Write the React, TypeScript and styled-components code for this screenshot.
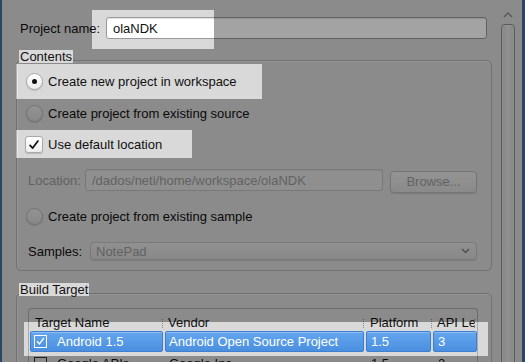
import React from 'react';
import styled, { createGlobalStyle } from 'styled-components';

const Global = createGlobalStyle`
  html, body { margin: 0; padding: 0; }
  body {
    width: 525px; height: 362px; overflow: hidden;
    background: #d9d9d9;
    font-family: "Liberation Sans", Arial, sans-serif;
  }
`;

const Window = styled.div`
  position: relative;
  width: 525px;
  height: 362px;
  overflow: hidden;
  display: flex;
  background: #d9d9d9;
  color: #111;
  font-size: 13px;
  line-height: 15px;
`;

const Edge = styled.div<{ $w: number }>`
  width: ${p => p.$w}px;
  flex-shrink: 0;
  background: #46709c;
`;

const Main = styled.div`
  width: 479px;
  padding-left: 14px;
  display: flex;
  flex-direction: column;
`;

const NameRow = styled.div`
  display: flex;
  align-items: center;
  margin-top: 17px;
  height: 22px;
`;

const Label = styled.span<{ $w: number; $pad?: number; $disabled?: boolean }>`
  width: ${p => p.$w}px;
  padding-left: ${p => p.$pad ?? 0}px;
  flex-shrink: 0;
  color: ${p => (p.$disabled ? '#9a9a9a' : '#111')};
`;

const TextInput = styled.div<{ $w: number; $disabled?: boolean }>`
  box-sizing: border-box;
  width: ${p => p.$w}px;
  height: 22px;
  border: 1px solid ${p => (p.$disabled ? '#bcbcbc' : '#9a9a9a')};
  border-radius: 3px;
  background: ${p => (p.$disabled ? '#e0e0e0' : '#ffffff')};
  box-shadow: inset 0 1px 1px rgba(0, 0, 0, ${p => (p.$disabled ? 0.05 : 0.12)});
  padding-left: 6px;
  display: flex;
  align-items: center;
  color: ${p => (p.$disabled ? '#9a9a9a' : '#111')};
`;

const Group = styled.div<{ $top: number }>`
  margin-top: ${p => p.$top}px;
  display: flex;
  flex-direction: column;
`;

const GroupTitle = styled.span`
  position: relative;
  z-index: 1;
  align-self: flex-start;
  margin-left: 3px;
  padding: 0 1px;
  height: 13px;
  line-height: 14px;
  background: #d9d9d9;
`;

const GroupBox = styled.div<{ $h: number; $padTop: number }>`
  box-sizing: border-box;
  margin-top: -3px;
  width: 476px;
  height: ${p => p.$h}px;
  border: 1px solid #b1b1b1;
  border-radius: 5px;
  box-shadow: inset 1px 1px 0 #e6e6e6;
  padding-top: ${p => p.$padTop}px;
  display: flex;
  flex-direction: column;
`;

const OptionRow = styled.div<{ $h: number; $pad?: number }>`
  height: ${p => p.$h}px;
  display: flex;
  align-items: center;
  gap: 5px;
  padding-left: ${p => p.$pad ?? 9}px;
`;

const Radio = styled.span<{ $on?: boolean }>`
  box-sizing: border-box;
  width: 17px;
  height: 17px;
  border-radius: 50%;
  border: 1px solid ${p => (p.$on ? '#a9a9a9' : '#b3b3b3')};
  background: ${p => (p.$on ? 'linear-gradient(#ffffff, #ececec)' : 'linear-gradient(#e6e6e6, #d4d4d4)')};
  box-shadow: 0 1px 1px rgba(0, 0, 0, 0.15);
  display: flex;
  align-items: center;
  justify-content: center;
  flex-shrink: 0;
  &::after {
    content: '';
    display: ${p => (p.$on ? 'block' : 'none')};
    width: 5px;
    height: 5px;
    border-radius: 50%;
    background: #111;
  }
`;

const CheckBox = styled.span`
  box-sizing: border-box;
  width: 18px;
  height: 17px;
  margin-left: -1px;
  border-radius: 3px;
  border: 1px solid #a9a9a9;
  background: linear-gradient(#ffffff, #eeeeee);
  box-shadow: 0 1px 1px rgba(0, 0, 0, 0.15);
  display: flex;
  align-items: center;
  justify-content: center;
  flex-shrink: 0;
`;

const FieldRow = styled.div<{ $h: number }>`
  height: ${p => p.$h}px;
  display: flex;
  align-items: center;
  padding-left: 11px;
`;

const Button = styled.div`
  box-sizing: border-box;
  margin-left: 7px;
  margin-top: 3px;
  width: 87px;
  height: 22px;
  border: 1px solid #b8b8b8;
  border-radius: 4px;
  background: linear-gradient(#e8e8e8, #d8d8d8);
  box-shadow: 0 1px 1px rgba(0, 0, 0, 0.12);
  color: #9a9a9a;
  display: flex;
  align-items: center;
  justify-content: center;
`;

const Combo = styled.div`
  box-sizing: border-box;
  width: 387px;
  height: 18px;
  border: 1px solid #bdbdbd;
  border-radius: 4px;
  background: linear-gradient(#e2e2e2, #d6d6d6);
  box-shadow: 0 1px 1px rgba(0, 0, 0, 0.12);
  color: #9a9a9a;
  display: flex;
  align-items: center;
  justify-content: space-between;
  padding: 0 6px 0 5px;
`;

const Table = styled.div`
  box-sizing: border-box;
  margin-left: 11px;
  width: 450px;
  height: 80px;
  border: 1px solid #aaaaaa;
  border-bottom: none;
  border-radius: 4px 4px 0 0;
  background: #d9d9d9;
  display: flex;
  flex-direction: column;
`;

const HeaderRow = styled.div`
  height: 22px;
  display: flex;
  align-items: flex-end;
  padding-bottom: 1px;
  box-sizing: border-box;
`;

const HeadCell = styled.div<{ $w: number; $pad: number }>`
  position: relative;
  width: ${p => p.$w}px;
  box-sizing: border-box;
  padding-left: ${p => p.$pad}px;
  white-space: nowrap;
  overflow: hidden;
  color: #111;
  &::after {
    content: '';
    position: absolute;
    right: 0;
    top: 4px;
    height: 9px;
    border-right: 1px dotted #8c8c8c;
  }
`;

const BodyRow = styled.div<{ $sel?: boolean }>`
  height: 22px;
  display: flex;
  gap: 2px;
  padding-left: 1px;
  box-sizing: border-box;
  color: ${p => (p.$sel ? '#ffffff' : '#111')};
`;

const Cell = styled.div<{ $w: number; $pad: number; $sel?: boolean }>`
  box-sizing: border-box;
  width: ${p => p.$w}px;
  height: 21px;
  padding-left: ${p => p.$pad}px;
  display: flex;
  align-items: center;
  gap: 10px;
  white-space: nowrap;
  overflow: hidden;
  border-radius: 2px;
  border: 1px solid ${p => (p.$sel ? '#3e7fd0' : 'transparent')};
  background: ${p => (p.$sel ? 'linear-gradient(#64a6ee, #4a8fe0)' : 'transparent')};
  box-shadow: ${p => (p.$sel ? 'inset 0 1px 0 rgba(255,255,255,0.25)' : 'none')};
`;

const TableCheck = styled.span<{ $sel?: boolean }>`
  box-sizing: border-box;
  width: 13px;
  height: 13px;
  border: 1px solid ${p => (p.$sel ? '#ffffff' : '#333333')};
  display: flex;
  align-items: center;
  justify-content: center;
  flex-shrink: 0;
`;

const ScrollCol = styled.div`
  width: 27px;
  flex-shrink: 0;
  display: flex;
  flex-direction: column;
  align-items: flex-start;
  padding-left: 6px;
  box-sizing: border-box;
`;

const Arrow = styled.svg`
  margin-top: 12px;
  margin-left: 2px;
`;

const Thumb = styled.div`
  box-sizing: border-box;
  margin-top: 6px;
  width: 14px;
  flex: 1;
  margin-bottom: -10px;
  border: 1px solid #8e8e8e;
  border-radius: 4px;
  background: linear-gradient(90deg, #d2d2d2, #e2e2e2 50%, #d2d2d2);
  box-shadow: 0 0 0 1px rgba(255, 255, 255, 0.3) inset;
`;

const Dim = styled.svg`
  position: absolute;
  left: 0;
  top: 0;
  pointer-events: none;
`;

const holes: [number, number, number, number][] = [
  [92, 10, 122, 39],
  [16, 64, 246, 35],
  [16, 130, 176, 28],
  [24, 322, 464, 34],
];

const dimPath =
  'M0 0H525V362H0Z ' + holes.map(([x, y, w, h]) => `M${x} ${y}h${w}v${h}h${-w}Z`).join(' ');

const Check = ({ color, size }: { color: string; size: number }) => (
  <svg width={size} height={size} viewBox="0 0 16 16">
    <path d="M3.5 8.5 L6.5 11.5 L12.5 3.5" fill="none" stroke={color} strokeWidth={2} strokeLinecap="round" strokeLinejoin="round" />
  </svg>
);

const cols = [
  { w: 134, pad: 6, title: 'Target Name' },
  { w: 201, pad: 5, title: 'Vendor' },
  { w: 68, pad: 6, title: 'Platform' },
  { w: 43, pad: 5, title: 'API Level' },
];

const cellWidths = [133, 199, 65, 44];
const cellPads = [3, 3, 4, 4];

const rows = [
  { name: 'Android 1.5', vendor: 'Android Open Source Project', platform: '1.5', api: '3', sel: true },
  { name: 'Google APIs', vendor: 'Google Inc.', platform: '1.5', api: '3', sel: false },
];

export default function App() {
  return (
    <>
      <Global />
      <Window>
        <Edge $w={2} />
        <Main>
          <NameRow>
            <Label $w={86} $pad={4}>Project name:</Label>
            <TextInput $w={381}>olaNDK</TextInput>
          </NameRow>

          <Group $top={11}>
            <GroupTitle>Contents</GroupTitle>
            <GroupBox $h={211} $padTop={5}>
              <OptionRow $h={32}>
                <Radio $on />
                <span>Create new project in workspace</span>
              </OptionRow>
              <OptionRow $h={31}>
                <Radio />
                <span>Create project from existing source</span>
              </OptionRow>
              <OptionRow $h={32}>
                <CheckBox>
                  <Check color="#111" size={14} />
                </CheckBox>
                <span>Use default location</span>
              </OptionRow>
              <FieldRow $h={40}>
                <Label $w={57} $disabled>Location:</Label>
                <TextInput $w={298} $disabled>/dados/neti/home/workspace/olaNDK</TextInput>
                <Button>Browse...</Button>
              </FieldRow>
              <OptionRow $h={32}>
                <Radio />
                <span>Create project from existing sample</span>
              </OptionRow>
              <FieldRow $h={38}>
                <Label $w={62}>Samples:</Label>
                <Combo>
                  <span>NotePad</span>
                  <svg width="9" height="6" viewBox="0 0 9 6">
                    <path d="M1 1 L4.5 4.5 L8 1" fill="none" stroke="#7a7a7a" strokeWidth="1.4" />
                  </svg>
                </Combo>
              </FieldRow>
            </GroupBox>
          </Group>

          <Group $top={12}>
            <GroupTitle>Build Target</GroupTitle>
            <GroupBox $h={90} $padTop={14}>
              <Table>
                <HeaderRow>
                  {cols.map(c => (
                    <HeadCell key={c.title} $w={c.w} $pad={c.pad}>
                      {c.title}
                    </HeadCell>
                  ))}
                </HeaderRow>
                {rows.map(r => (
                  <BodyRow key={r.name} $sel={r.sel}>
                    <Cell $w={cellWidths[0]} $pad={cellPads[0]} $sel={r.sel}>
                      <TableCheck $sel={r.sel}>{r.sel && <Check color="#ffffff" size={11} />}</TableCheck>
                      <span>{r.name}</span>
                    </Cell>
                    <Cell $w={cellWidths[1]} $pad={cellPads[1]} $sel={r.sel}>{r.vendor}</Cell>
                    <Cell $w={cellWidths[2]} $pad={cellPads[2]} $sel={r.sel}>{r.platform}</Cell>
                    <Cell $w={cellWidths[3]} $pad={cellPads[3]} $sel={r.sel}>{r.api}</Cell>
                  </BodyRow>
                ))}
              </Table>
            </GroupBox>
          </Group>
        </Main>
        <ScrollCol>
          <Arrow width="10" height="6" viewBox="0 0 10 6">
            <path d="M1 5 L5 1 L9 5" fill="none" stroke="#8a8a8a" strokeWidth="1.3" />
          </Arrow>
          <Thumb />
        </ScrollCol>
        <Edge $w={3} />
        <Dim width="525" height="362" viewBox="0 0 525 362">
          <path d={dimPath} fillRule="evenodd" fill="rgba(0,0,0,0.36)" />
        </Dim>
      </Window>
    </>
  );
}
